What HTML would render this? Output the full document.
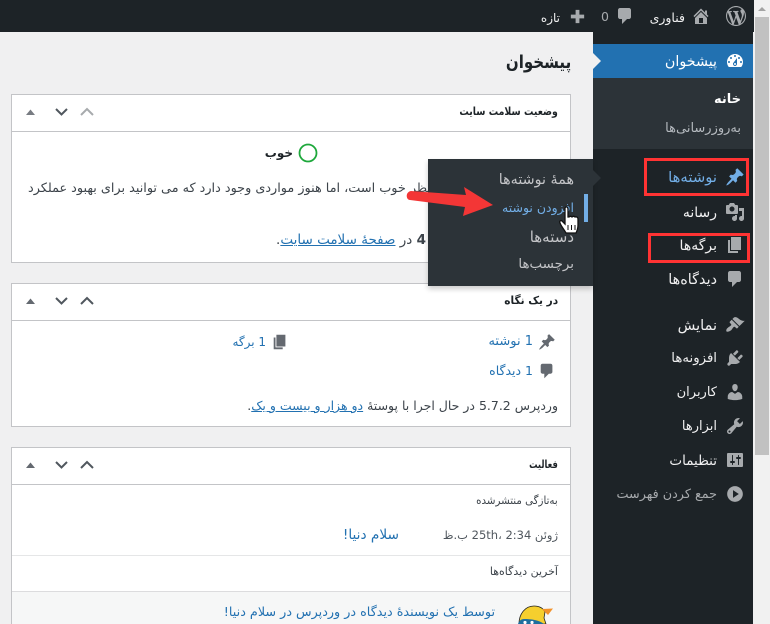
<!DOCTYPE html>
<html lang="fa"><head><meta charset="utf-8"><title>پیشخوان</title>
<style>
html,body{margin:0;padding:0;width:770px;height:624px;overflow:hidden;background:#f0f0f1}
body{position:relative;font-family:"DejaVu Sans","Liberation Sans",sans-serif;font-size:12.500px;color:#3c434a}
.a{position:absolute}
.t{position:absolute;direction:rtl;white-space:nowrap;line-height:20px;height:20px}
.box{position:absolute;left:11px;width:558px;background:#fff;border:1px solid #c3c4c7}
.line{position:absolute;left:12px;width:558px;height:1px;background:#c3c4c7}
.m{color:#f0f0f1;font-size:13.500px}
.f{color:#c3c4c7;font-size:13px;z-index:6}
a{color:#2271b1}
.b{color:#2271b1}
svg{position:absolute;display:block}
.ic{fill:#a7aaad}
.r{position:absolute;border:3px solid #f33;box-sizing:border-box;z-index:8}
.h{font-weight:bold;font-size:11px;color:#1d2327;transform-origin:100% 50%}
</style></head><body>

<!-- panels -->
<div class="t" style="right:199px;top:50px;font-size:18px;font-weight:bold;color:#1d2327;line-height:26px;height:26px;transform:scaleX(.835);transform-origin:100% 50%">پیشخوان</div>

<div class="box" style="top:94px;height:167px"></div><div class="line" style="top:131px"></div>
<div class="t h" style="right:212px;top:102px;transform:scaleX(.85)">وضعیت سلامت سایت</div>
<svg style="left:24px;top:106px" width="70" height="12" viewBox="0 0 70 12"><path d="M2 9L6.500 3.500 11 9z" fill="#787c82"/><path d="M32 3l5.500 5.500L43 3" fill="none" stroke="#50575e" stroke-width="2"/><path d="M57 9l6-6 6 6" fill="none" stroke="#a7aaad" stroke-width="2"/></svg>
<svg style="left:298px;top:143px" width="20" height="20"><circle cx="10" cy="10" r="8.500" fill="none" stroke="#1ea83c" stroke-width="1.800"/></svg>
<div class="t" style="right:477px;top:143px;font-weight:bold;font-size:12px;color:#1d2327">خوب</div>
<div class="t" style="left:28px;top:179px;font-size:12.800px;color:#3c434a">وضعیت سایت شما از نظر خوب است، اما هنوز مواردی وجود دارد که می توانید برای بهبود عملکرد</div>
<div class="t" style="right:344px;top:230px;font-size:13.500px;color:#3c434a"><span style="font-weight:bold">4</span> در <a href="#">صفحهٔ سلامت سایت</a>.</div>

<div class="box" style="top:283px;height:142px"></div><div class="line" style="top:320px"></div>
<div class="t h" style="right:212px;top:291px;transform:scaleX(.96)">در یک نگاه</div>
<svg style="left:24px;top:295px" width="70" height="12" viewBox="0 0 70 12"><path d="M2 9L6.500 3.500 11 9z" fill="#646970"/><path d="M32 3l5.500 5.500L43 3" fill="none" stroke="#50575e" stroke-width="2"/><path d="M57 9l6-6 6 6" fill="none" stroke="#50575e" stroke-width="2"/></svg>
<svg style="left:538px;top:333px" width="18" height="18" viewBox="0 0 20 20" fill="#646970"><path d="M10.440 3.020l1.820-1.820 6.360 6.350-1.830 1.820c-1.050-.68-2.480-.57-3.410.36l-.75.75c-.92.930-1.040 2.350-.35 3.410l-1.830 1.820-2.410-2.410-2.800 2.790c-.42.42-3.380 2.710-3.800 2.290s1.860-3.390 2.280-3.810l2.790-2.790L4.100 9.360l1.830-1.820c1.050.69 2.480.57 3.400-.36l.75-.75c.93-.92 1.050-2.350.36-3.410z"/></svg>
<div class="t b" style="right:237px;top:332px;font-size:13px">1 نوشته</div>
<svg style="left:271px;top:333px" width="18" height="18" viewBox="0 0 20 20" fill="#646970"><path d="M6 15V2h10v13H6zm-1 1h8v2H3V5h2v11z"/></svg>
<div class="t b" style="right:504px;top:332px;font-size:12px">1 برگه</div>
<svg style="left:538px;top:362px" width="18" height="18" viewBox="0 0 20 20" fill="#646970"><path d="M5 2h9c1.100 0 2 .9 2 2v7c0 1.100-.9 2-2 2h-2l-5 5v-5H5c-1.100 0-2-.9-2-2V4c0-1.100.9-2 2-2z"/></svg>
<div class="t b" style="right:237px;top:361px">1 دیدگاه</div>
<div class="t" style="right:212px;top:396px">وردپرس 5.7.2 در حال اجرا با پوستهٔ <a href="#">دو هزار و بیست و یک</a>.</div>

<div class="box" style="top:447px;height:190px"></div><div class="line" style="top:484px"></div>
<div class="t h" style="right:212px;top:455px;transform:scaleX(.76)">فعالیت</div>
<svg style="left:24px;top:459px" width="70" height="12" viewBox="0 0 70 12"><path d="M2 9L6.500 3.500 11 9z" fill="#646970"/><path d="M32 3l5.500 5.500L43 3" fill="none" stroke="#50575e" stroke-width="2"/><path d="M57 9l6-6 6 6" fill="none" stroke="#50575e" stroke-width="2"/></svg>
<div class="t" style="right:212px;top:491px;font-size:11px;transform:scaleX(.93);transform-origin:100% 50%">به‌تازگی منتشرشده</div>
<div class="t" style="right:212px;top:525px;color:#50575e;font-size:11.500px">ژوئن 25th، 2:34 ب.ظ</div>
<div class="t b" style="right:371px;top:525px;font-size:13.700px">سلام دنیا!</div>
<div class="a" style="left:12px;top:555px;width:558px;height:1px;background:#e5e6e7"></div>
<div class="t" style="right:212px;top:562px;font-size:11px">آخرین دیدگاه‌ها</div>
<div class="a" style="left:12px;top:591px;width:558px;height:33px;background:#f6f7f7;border-top:1px solid #dcdcde;box-sizing:border-box"></div>
<div class="t b" style="right:275px;top:603px;font-size:12.750px">توسط یک نویسندهٔ دیدگاه در وردپرس در سلام دنیا!</div>
<svg style="left:516px;top:604px" width="38" height="20" viewBox="0 0 38 20"><path d="M3 20C3 10 9 2 18 2c5 0 9 2 11 6l-1 6 2 6z" fill="#f5cf2e" stroke="#222" stroke-width=".8"/><path d="M26 5l11-.5-5 6.500z" fill="#f2922b"/><path d="M2 20c1-3 3-5 6-5 7 0 15 1 20 5z" fill="#1f6f9f"/><circle cx="9" cy="18.500" r="1.600" fill="#fff"/><circle cx="16" cy="18.500" r="1.600" fill="#fff"/></svg>

<!-- admin bar -->
<div class="a" style="left:0;top:0;width:754px;height:32px;background:#1d2327;z-index:3"></div>
<div style="position:absolute;z-index:4;left:0;top:0;width:770px;height:32px">
<svg style="left:726px;top:6px" width="20" height="20" viewBox="0 0 20 20" class="ic"><path d="M20 10c0-5.510-4.490-10-10-10C4.480 0 0 4.490 0 10c0 5.520 4.480 10 10 10 5.510 0 10-4.480 10-10zM7.780 15.370L4.370 6.220c.55-.02 1.170-.08 1.170-.08.5-.06.44-1.130-.06-1.110 0 0-1.450.11-2.370.11-.18 0-.37 0-.58-.01C4.120 2.690 6.870 1.110 10 1.110c2.330 0 4.450.87 6.050 2.340-.68-.11-1.650.39-1.650 1.580 0 .74.45 1.360.9 2.100.35.61.55 1.360.55 2.460 0 1.490-1.400 5-1.400 5l-3.030-8.370c.54-.02.82-.17.82-.17.5-.05.44-1.250-.06-1.220 0 0-1.440.12-2.380.12-.87 0-2.330-.12-2.330-.12-.5-.03-.56 1.200-.06 1.220l.92.08 1.260 3.410zM17.410 10c.24-.64.74-1.870.43-4.250.7 1.290 1.050 2.710 1.050 4.250 0 3.290-1.730 6.240-4.400 7.780.97-2.590 1.940-5.200 2.920-7.780zM6.100 18.090C3.120 16.650 1.110 13.530 1.110 10c0-1.300.23-2.480.72-3.590C3.250 10.300 4.670 14.200 6.100 18.090zm4.030-6.630l2.580 6.980c-.86.29-1.760.45-2.710.45-.79 0-1.570-.11-2.290-.33.81-2.380 1.620-4.740 2.420-7.100z"/></svg>
<svg style="left:691px;top:6px" width="20" height="20" viewBox="0 0 20 20" class="ic"><path d="M16 8.500l1.530 1.530-1.060 1.060L10 4.620l-6.470 6.470-1.060-1.060L10 2.500l4 4v-2h2v4zm-6-2.460l6 5.990V18H4v-5.970zM12 17v-5H8v5h4z"/></svg>
<div class="t" style="right:85px;top:8px;color:#f0f0f1;font-size:12.500px">فناوری</div>
<svg style="left:615px;top:6px" width="20" height="20" viewBox="0 0 20 20" class="ic"><path d="M5 2h9c1.100 0 2 .9 2 2v7c0 1.100-.9 2-2 2h-2l-5 5v-5H5c-1.100 0-2-.9-2-2V4c0-1.100.9-2 2-2z"/></svg>
<div class="t" style="left:601px;top:7px;color:#a7aaad;font-size:12.500px">0</div>
<svg style="left:568px;top:7px" width="19" height="19" viewBox="0 0 20 20" class="ic"><path d="M17 8v4h-5v5H8v-5H3V8h5V3h4v5h5z"/></svg>
<div class="t" style="right:210px;top:8px;color:#f0f0f1;font-size:12px">تازه</div>
</div>

<!-- sidebar -->
<div class="a" style="left:593px;top:32px;width:160px;height:592px;background:#1d2327;z-index:3"></div>
<div class="a" style="left:593px;top:44px;width:160px;height:34px;background:#2271b1;z-index:3"></div>
<div class="a" style="left:593px;top:53px;width:0;height:0;border-left:8px solid #f0f0f1;border-top:8px solid transparent;border-bottom:8px solid transparent;z-index:4"></div>
<div class="a" style="left:593px;top:78px;width:160px;height:71px;background:#2c3338;z-index:3"></div>

<div style="position:absolute;z-index:5;left:0;top:0;width:770px;height:624px">
<svg style="left:725px;top:51px" width="20" height="20" viewBox="0 0 20 20" fill="#fff"><path d="M3.760 16h12.480c1.100-1.370 1.760-3.110 1.760-5 0-4.420-3.580-8-8-8s-8 3.580-8 8c0 1.890.66 3.630 1.760 5zM10 4c.55 0 1 .45 1 1s-.45 1-1 1-1-.45-1-1 .45-1 1-1zM6 6c.55 0 1 .45 1 1s-.45 1-1 1-1-.45-1-1 .45-1 1-1zm8 0c.55 0 1 .45 1 1s-.45 1-1 1-1-.45-1-1 .45-1 1-1zm-5.370 5.550L12 7v6c0 1.100-.9 2-2 2s-2-.9-2-2c0-.57.24-1.080.63-1.450zM4 10c.55 0 1 .45 1 1s-.45 1-1 1-1-.45-1-1 .45-1 1-1zm12 0c.55 0 1 .45 1 1s-.45 1-1 1-1-.45-1-1 .45-1 1-1zm-5 3c0-.55-.45-1-1-1s-1 .45-1 1 .45 1 1 1 1-.45 1-1z"/></svg>
<div class="t m" style="right:53px;top:52px;color:#fff;font-size:14.300px">پیشخوان</div>
<div class="t" style="right:29px;top:90px;color:#fff;font-weight:bold;font-size:13px">خانه</div>
<div class="t" style="right:29px;top:119px;color:#b4b9be;font-size:13px">به‌روزرسانی‌ها</div>

<svg style="left:725px;top:167px" width="20" height="20" viewBox="0 0 20 20" fill="#72aee6"><path d="M10.440 3.020l1.820-1.820 6.360 6.350-1.830 1.820c-1.050-.68-2.480-.57-3.410.36l-.75.75c-.92.930-1.040 2.350-.35 3.410l-1.830 1.820-2.410-2.410-2.800 2.790c-.42.42-3.380 2.710-3.800 2.290s1.860-3.390 2.280-3.810l2.790-2.790L4.100 9.360l1.830-1.820c1.050.69 2.480.57 3.400-.36l.75-.75c.93-.92 1.050-2.350.36-3.410z"/></svg>
<div class="t m" style="right:53px;top:168px;color:#72aee6;font-size:14.800px">نوشته‌ها</div>
<svg style="left:725px;top:202px" width="20" height="20" viewBox="0 0 20 20" class="ic"><path d="M13 11V4c0-.55-.45-1-1-1h-1.670L9 1H5L3.670 3H2c-.55 0-1 .45-1 1v7c0 .55.45 1 1 1h10c.55 0 1-.45 1-1zM7 4.500c1.380 0 2.500 1.120 2.500 2.500S8.380 9.500 7 9.500 4.500 8.380 4.500 7 5.620 4.500 7 4.500zM14 6h5v10.500c0 1.380-1.120 2.500-2.500 2.500S14 17.880 14 16.500s1.120-2.500 2.500-2.500c.17 0 .34.02.5.05V9h-3V6zm-4 8.050V13h2v3.500c0 1.380-1.120 2.500-2.500 2.500S7 17.880 7 16.500 8.120 14 9.500 14c.17 0 .34.02.5.05z"/></svg>
<div class="t m" style="right:53px;top:203px;font-size:14px">رسانه</div>
<svg style="left:725px;top:235px" width="20" height="20" viewBox="0 0 20 20" class="ic"><path d="M6 15V2h10v13H6zm-1 1h8v2H3V5h2v11z"/></svg>
<div class="t m" style="right:53px;top:236px;font-size:14px">برگه‌ها</div>
<svg style="left:725px;top:269px" width="20" height="20" viewBox="0 0 20 20" class="ic"><path d="M5 2h9c1.100 0 2 .9 2 2v7c0 1.100-.9 2-2 2h-2l-5 5v-5H5c-1.100 0-2-.9-2-2V4c0-1.100.9-2 2-2z"/></svg>
<div class="t m" style="right:53px;top:270px;font-size:14.400px">دیدگاه‌ها</div>
<svg style="left:725px;top:315px" width="20" height="20" viewBox="0 0 20 20" class="ic"><path d="M14.480 11.060L7.410 3.990l1.500-1.500c.5-.56 2.300-.47 3.510.32 1.210.8 1.430 1.280 2.910 2.100 1.180.64 2.450 1.260 4.450.85zm-.71.71L6.700 4.700 4.930 6.470c-.39.39-.39 1.020 0 1.410l1.060 1.060c.39.39.39 1.030 0 1.420-.6.6-1.430 1.110-2.210 1.690-.35.26-.7.53-1.010.84C1.430 13.710.96 15.650 1.500 16.500c.85.54 2.790.07 4.630-1.270.31-.31.58-.66.84-1.010.58-.78 1.090-1.610 1.690-2.210.39-.39 1.020-.39 1.410 0l1.060 1.060c.39.39 1.020.39 1.410 0z"/></svg>
<div class="t m" style="right:53px;top:316px;font-size:14.500px">نمایش</div>
<svg style="left:725px;top:348px" width="20" height="20" viewBox="0 0 20 20" class="ic"><path d="M13.110 4.360L9.870 7.600 8 5.730l3.240-3.240c.35-.34 1.050-.2 1.560.32.52.51.66 1.210.31 1.550zm-8 1.770l.91-1.120 9.010 9.010-1.190.84c-.71.71-2.630 1.160-3.820 1.160H6.140L4.900 17.260c-.59.59-1.540.59-2.120 0-.59-.58-.59-1.530 0-2.120l1.240-1.240v-3.880c0-1.130.4-3.190 1.090-3.890zm7.260 3.970l3.240-3.240c.34-.35 1.040-.21 1.550.31.52.51.66 1.210.31 1.550l-3.240 3.250z"/></svg>
<div class="t m" style="right:53px;top:349px;font-size:13.300px">افزونه‌ها</div>
<svg style="left:725px;top:382px" width="20" height="20" viewBox="0 0 20 20" class="ic"><path d="M10 9.250c-2.270 0-2.730-3.440-2.730-3.440C7 4.020 7.820 2 9.970 2c2.160 0 2.980 2.020 2.710 3.810 0 0-.41 3.440-2.680 3.440zm0 2.570L12.720 10c2.390 0 4.520 2.330 4.520 4.530v2.490s-3.650 1.130-7.240 1.130c-3.650 0-7.240-1.130-7.240-1.130v-2.490c0-2.250 1.940-4.480 4.470-4.480z"/></svg>
<div class="t m" style="right:53px;top:383px;font-size:13px">کاربران</div>
<svg style="left:725px;top:416px" width="20" height="20" viewBox="0 0 20 20" class="ic"><path d="M16.680 9.770c-1.340 1.340-3.300 1.670-4.950.99l-5.410 6.520c-.99.99-2.590.99-3.580 0s-.99-2.590 0-3.570l6.520-5.420c-.68-1.650-.35-3.610.99-4.950 1.280-1.280 3.120-1.620 4.720-1.060l-2.890 2.890 2.820 2.820 2.860-2.870c.53 1.580.18 3.390-1.080 4.650zM3.810 16.210c.4.39 1.040.39 1.430 0 .4-.4.4-1.040 0-1.430-.39-.4-1.030-.4-1.430 0-.39.39-.39 1.030 0 1.430z"/></svg>
<div class="t m" style="right:53px;top:417px;font-size:13px">ابزارها</div>
<svg style="left:725px;top:450px" width="20" height="20" viewBox="0 0 20 20" class="ic"><path d="M18 16V4c0-.55-.45-1-1-1H3c-.55 0-1 .45-1 1v12c0 .55.45 1 1 1h14c.55 0 1-.45 1-1zM8 11h1c.55 0 1 .45 1 1s-.45 1-1 1H8v1.500c0 .28-.22.5-.5.5s-.5-.22-.5-.5V13H6c-.55 0-1-.45-1-1s.45-1 1-1h1V5.500c0-.28.22-.5.5-.5s.5.22.5.5V11zm5-2h-1c-.55 0-1-.45-1-1s.45-1 1-1h1V5.500c0-.28.22-.5.5-.5s.5.22.5.5V7h1c.55 0 1 .45 1 1s-.45 1-1 1h-1v5.500c0 .28-.22.5-.5.5s-.5-.22-.5-.5V9z"/></svg>
<div class="t m" style="right:53px;top:451px;font-size:13.500px">تنظیمات</div>
<svg style="left:725px;top:484px;transform:scaleX(-1)" width="20" height="20" viewBox="0 0 20 20" class="ic"><path d="M10 2.160c4.330 0 7.840 3.510 7.840 7.840s-3.510 7.840-7.840 7.840S2.160 14.330 2.160 10 5.710 2.160 10 2.160zm2 11.720V6.120L6.180 9.970z"/></svg>
<div class="t" style="right:53px;top:485px;color:#a7aaad;font-size:12.750px">جمع کردن فهرست</div>
</div>

<!-- flyout -->
<div class="a" style="left:428px;top:159px;width:165px;height:127px;background:#2c3338;box-shadow:0 3px 5px rgba(0,0,0,.2);z-index:5"></div>
<div class="a" style="left:593px;top:170px;width:0;height:0;border-left:8px solid #2c3338;border-top:8px solid transparent;border-bottom:8px solid transparent;z-index:6"></div>
<div class="a" style="left:584px;top:194px;width:4px;height:28px;background:#72aee6;z-index:6"></div>
<div class="t f" style="right:196px;top:170px;font-size:14.300px">همهٔ نوشته‌ها</div>
<div class="t f" style="right:196px;top:198px;color:#72aee6;font-size:12.500px">افزودن نوشته</div>
<div class="t f" style="right:196px;top:227px;font-size:15px">دسته‌ها</div>
<div class="t f" style="right:196px;top:255px;font-size:13.400px">برچسب‌ها</div>

<!-- annotations -->
<div class="r" style="left:644px;top:158px;width:105px;height:38px"></div>
<div class="r" style="left:648px;top:233px;width:102px;height:30px"></div>
<svg style="left:400px;top:180px;z-index:9" width="100" height="42" viewBox="0 0 100 42"><path d="M11 11L66 15 64 7 93 25 63 36 65 27 10 20C6 20 5 12 11 11z" fill="#f33636"/></svg>
<svg style="left:558px;top:205px;z-index:9" width="24" height="32" viewBox="0 0 24 32"><path d="M7 3c1-2 3-1 3 1v8l1 0c1-1 2-1 3 0 1-1 2-1 3 0 1-.5 3 0 3 2v6c0 4-1 6-2 8H8c-1-2-5-7-6-10-1-2 1-3 2-2l3 3z" fill="#fff" stroke="#111" stroke-width="1.300"/><path d="M10 20v5M13.500 20v5M17 20v5" stroke="#111" stroke-width="1"/></svg>

<!-- scrollbar -->
<div class="a" style="left:754px;top:0;width:16px;height:624px;background:#f1f1f1;z-index:3"></div>
<div class="a" style="left:755px;top:17px;width:14px;height:438px;background:#c1c1c1;z-index:4"></div>
<div class="a" style="left:758px;top:7px;width:0;height:0;border-bottom:4px solid #a3a3a3;border-left:4px solid transparent;border-right:4px solid transparent;z-index:4"></div>
</body></html>
